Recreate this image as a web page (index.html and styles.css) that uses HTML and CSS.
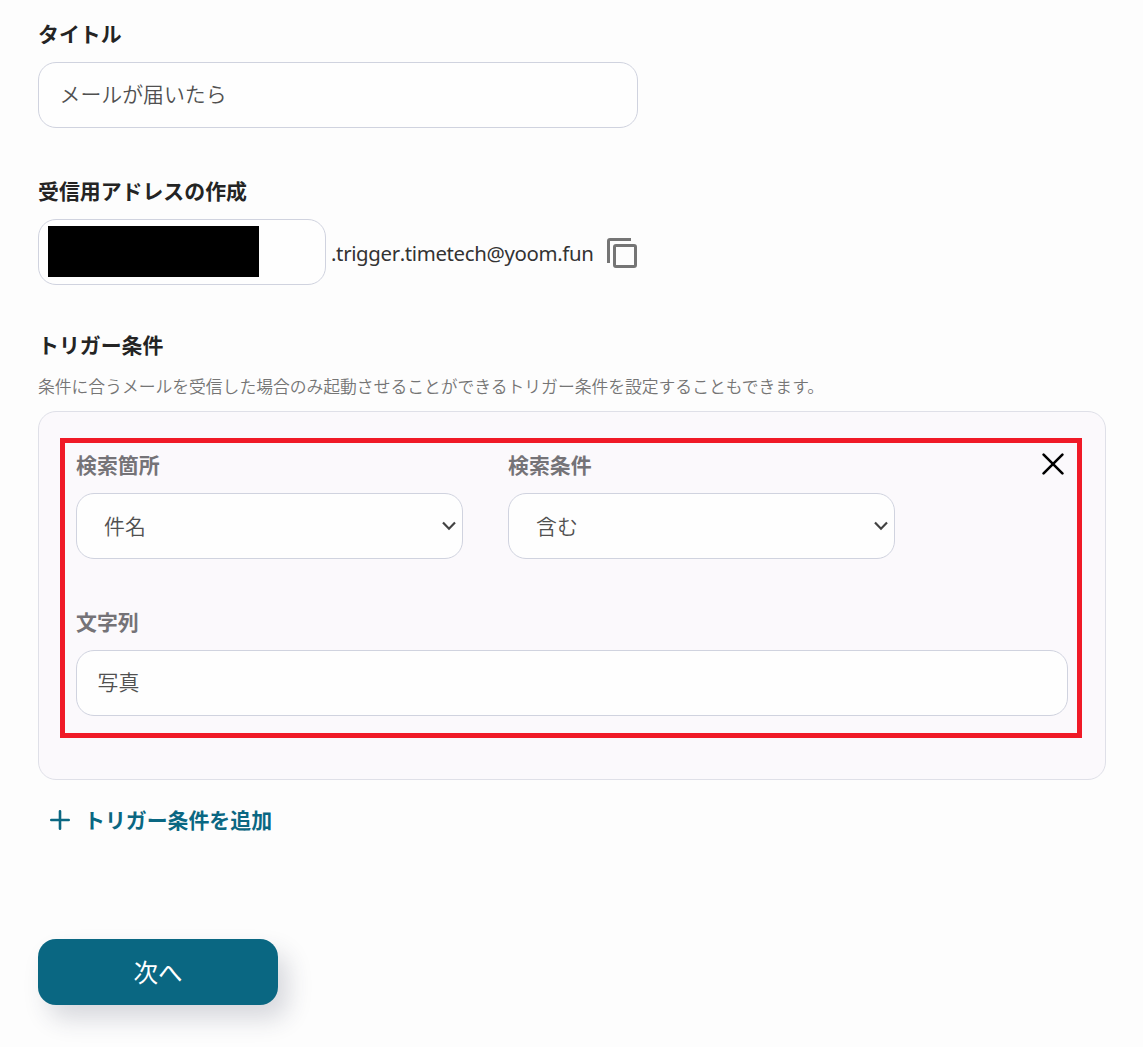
FILE: index.html
```html
<!DOCTYPE html>
<html lang="ja">
<head>
<meta charset="utf-8">
<title>メールトリガー設定</title>
<link rel="stylesheet" href="styles.css">
</head>
<body>
<main class="form">
  <section class="group group-title">
    <h2 class="label">タイトル</h2>
    <div class="field field-text field-title" role="textbox"><span class="value">メールが届いたら</span></div>
  </section>

  <section class="group group-address">
    <h2 class="label">受信用アドレスの作成</h2>
    <div class="address">
      <div class="field field-address" role="textbox"><span class="mask"></span></div>
      <span class="domain">.trigger.timetech@yoom.fun</span>
      <svg class="copy" width="32" height="32" viewBox="0 0 32 32" fill="none" stroke="#757575" stroke-width="3">
        <path d="M25 2.500H4Q2.500 2.500 2.500 4V26"/>
        <rect x="8.500" y="8.500" width="21" height="21" rx="1.500"/>
      </svg>
    </div>
  </section>

  <section class="group">
    <h2 class="label">トリガー条件</h2>
    <p class="hint">条件に合うメールを受信した場合のみ起動させることができるトリガー条件を設定することもできます。</p>
    <div class="panel">
      <div class="highlight"></div>
      <div class="conditions">
        <div class="condition">
          <h3 class="label sublabel">検索箇所</h3>
          <div class="field select" role="combobox">
            <span class="value">件名</span>
            <svg class="chevron" width="14" height="10" viewBox="0 0 14 10" fill="none" stroke="#424242" stroke-width="2.200"><path d="M1 1.500L7 7.700L13 1.500"/></svg>
          </div>
        </div>
        <div class="condition">
          <h3 class="label sublabel">検索条件</h3>
          <div class="field select" role="combobox">
            <span class="value">含む</span>
            <svg class="chevron" width="14" height="10" viewBox="0 0 14 10" fill="none" stroke="#424242" stroke-width="2.200"><path d="M1 1.500L7 7.700L13 1.500"/></svg>
          </div>
        </div>
        <svg class="close" width="22" height="22" viewBox="0 0 22 22" fill="none" stroke="#000" stroke-width="2.600" stroke-linecap="round"><path d="M1.600 1.600L20.400 20.400M20.400 1.600L1.600 20.400"/></svg>
      </div>
      <h3 class="label sublabel">文字列</h3>
      <div class="field field-text" role="textbox"><span class="value">写真</span></div>
    </div>
  </section>

  <div class="add" role="button">
    <svg class="plus" width="20" height="20" viewBox="0 0 20 20" fill="none" stroke="#0a6782" stroke-width="2.600" stroke-linecap="round"><path d="M10 1.300V18.700M1.300 10H18.700"/></svg>
    <span class="add-text">トリガー条件を追加</span>
  </div>

  <div class="next" role="button">次へ</div>
</main>
</body>
</html>
```
FILE: styles.css
```css
* {
  box-sizing: border-box;
}

body {
  margin: 0;
  background: #fdfdfd;
  color: #242424;
  font-family: "Noto Sans CJK JP", sans-serif;
  font-size: 20.9px;
}

.form {
  width: 1106px;
  height: 1047px;
  padding: 19px 0 0 38px;
}

.label {
  height: 30px;
  margin: 0 0 13px;
  font-size: 20.9px;
  font-weight: 700;
  line-height: 28px;
  white-space: nowrap;
}

.sublabel {
  color: #757377;
}

.field {
  display: flex;
  align-items: center;
  height: 66px;
  padding: 0 20px;
  border: 1px solid #d0d3df;
  border-radius: 18px;
  background: #fefefe;
}

.field-text {
  padding: 0 20.500px 5px;
}

.value {
  color: #505050;
  font-weight: 350;
  line-height: 30px;
  white-space: nowrap;
}

.field-title {
  width: 600px;
}

.group-title {
  margin-bottom: 48px;
}

.group-address {
  margin-bottom: 45px;
}

.address {
  display: flex;
  align-items: center;
}

.field-address {
  width: 288px;
  padding: 0 9px 1px;
}

.mask {
  width: 211px;
  height: 51px;
  background: #000;
}

.domain {
  width: 262px;
  margin: 2px 0 0 5px;
  color: #333;
  font-family: "Noto Sans", sans-serif;
  font-size: 20.400px;
  font-kerning: none;
  letter-spacing: -0.350px;
  line-height: 30px;
  white-space: nowrap;
}

.copy {
  margin: 2px 0 0 13px;
}

.hint {
  height: 26px;
  margin: 0 0 12px;
  color: #757575;
  font-size: 16.800px;
  font-weight: 350;
  line-height: 26px;
  white-space: nowrap;
}

.panel {
  position: relative;
  width: 1068px;
  height: 369px;
  padding: 38px 37px;
  border: 1px solid #dfe0e8;
  border-radius: 18px;
  background: #fbf9fc;
}

.highlight {
  position: absolute;
  top: 26px;
  left: 21px;
  width: 1022px;
  height: 300px;
  border: 5px solid #f01a27;
}

.conditions {
  display: flex;
  gap: 45px;
  margin-bottom: 48px;
}

.condition {
  width: 387px;
}

.select {
  justify-content: space-between;
  padding: 0 6px 2px 27px;
}

.chevron {
  margin-top: 2px;
}

.close {
  margin: 3px 4px 0 auto;
}

.add {
  display: flex;
  align-items: center;
  gap: 14px;
  height: 32px;
  margin: 24px 0 0 12px;
  color: #0a6782;
  font-weight: 700;
}

.add-text {
  padding-bottom: 2px;
  line-height: 30px;
}

.next {
  width: 240px;
  height: 66px;
  margin-top: 103px;
  border-radius: 18px;
  background: #0a6782;
  box-shadow: 10px 14px 24px rgba(45, 50, 75, 0.18);
  color: #fff;
  font-size: 24.500px;
  line-height: 66px;
  text-align: center;
}
```
